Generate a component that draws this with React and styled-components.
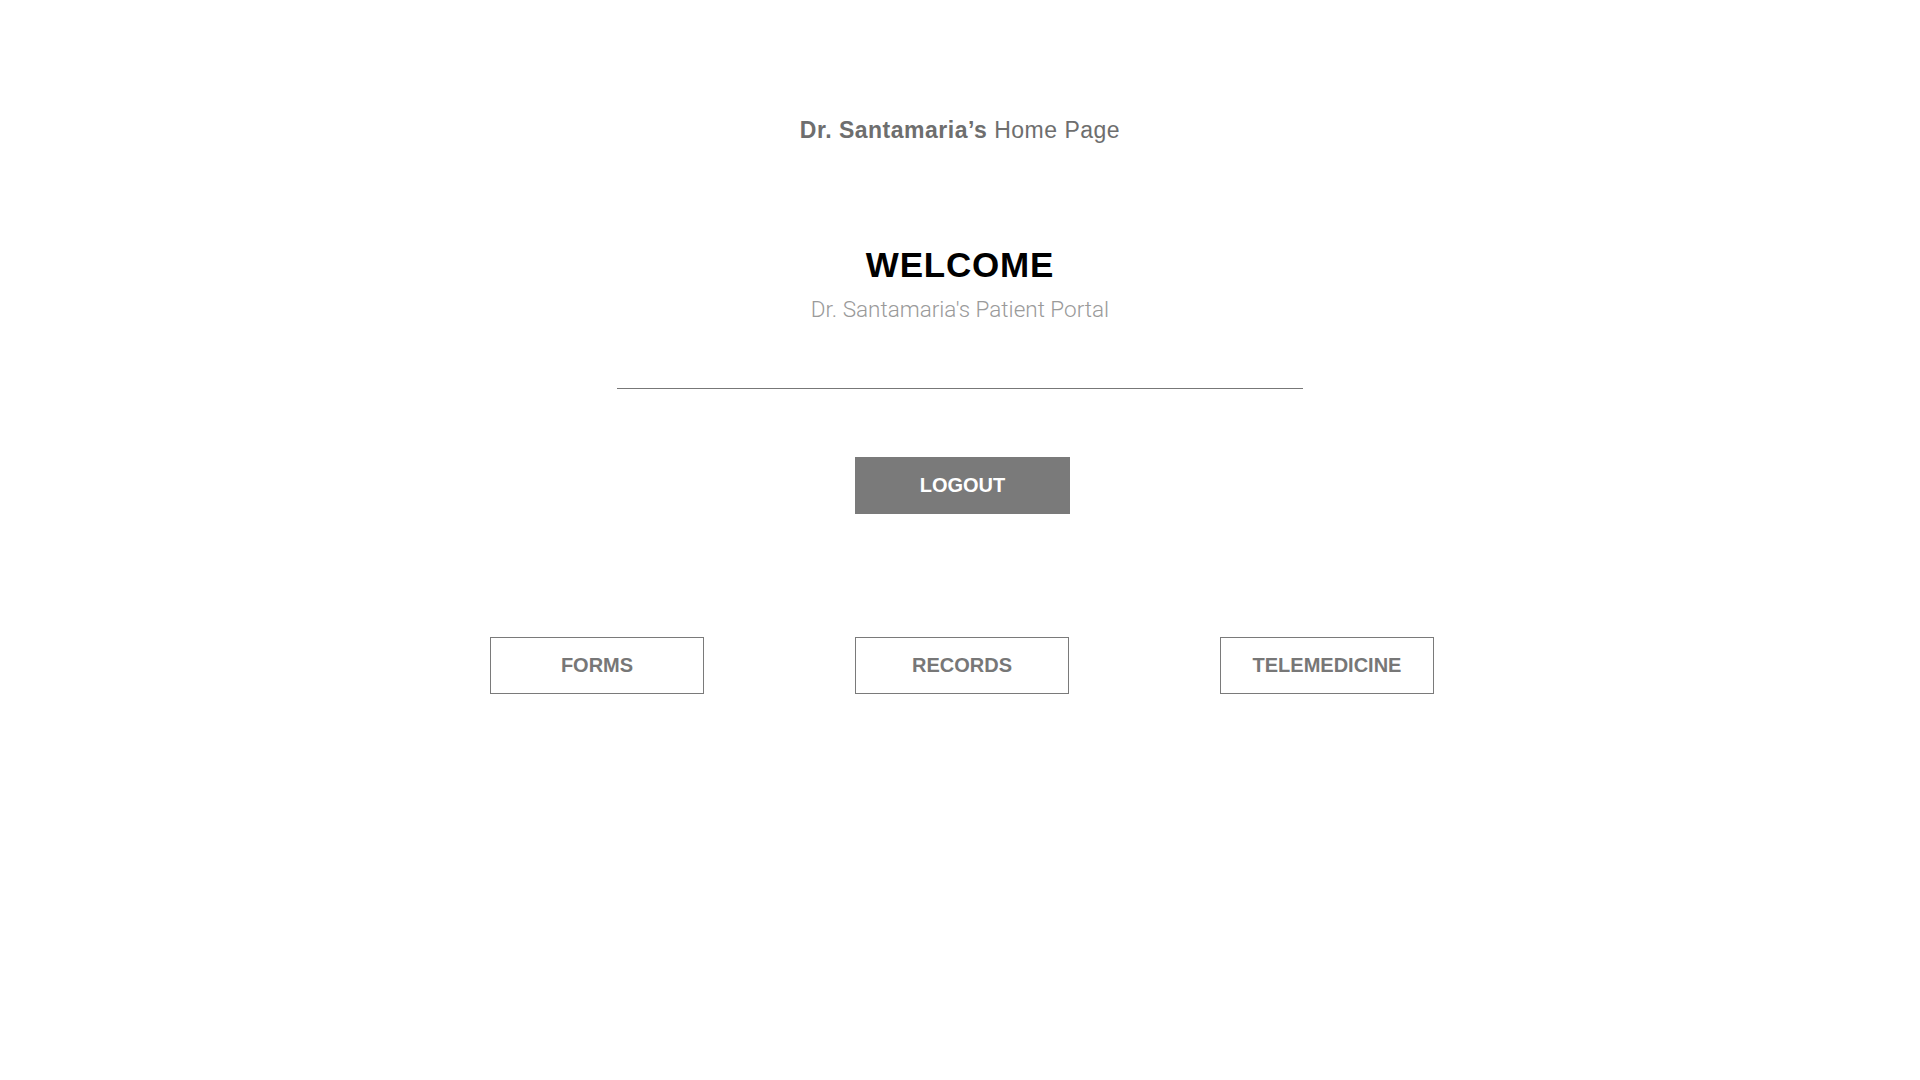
import React from 'react';
import styled, { createGlobalStyle } from 'styled-components';

const GlobalStyle = createGlobalStyle`
  html, body {
    margin: 0;
    padding: 0;
    background: #ffffff;
  }
  body {
    font-family: "Liberation Sans", Arial, sans-serif;
  }
`;

const Page = styled.div`
  display: flex;
  flex-direction: column;
  align-items: center;
  min-height: 100vh;
  padding-top: 117px;
  box-sizing: border-box;
`;

const PageTitle = styled.h1`
  margin: 0;
  font-size: 23px;
  line-height: 26px;
  font-weight: 400;
  letter-spacing: 0.5px;
  color: #6e6e6e;

  strong {
    font-weight: 700;
  }
`;

const Welcome = styled.h2`
  margin: 102px 0 0;
  font-size: 35px;
  line-height: 40px;
  font-weight: 700;
  letter-spacing: 0.8px;
  color: #000000;
`;

const Subtitle = styled.p`
  margin: 10px 0 0;
  font-family: Roboto, "Liberation Sans", sans-serif;
  font-size: 22.5px;
  line-height: 28px;
  font-weight: 300;
  color: #9a9a9a;
`;

const Divider = styled.hr`
  margin: 65px 0 0;
  width: 686px;
  height: 0;
  border: none;
  border-top: 1px solid #777777;
`;

const Button = styled.button`
  width: 215px;
  height: 57px;
  box-sizing: border-box;
  font-family: "Liberation Sans", Arial, sans-serif;
  font-size: 20px;
  font-weight: 700;
  cursor: pointer;
  color: ${p => (p.$filled ? '#ffffff' : '#777777')};
  background: ${p => (p.$filled ? '#7a7a7a' : '#ffffff')};
  border: ${p => (p.$filled ? 'none' : '1px solid #7a7a7a')};
`;

const LogoutWrap = styled.div`
  margin: 68px 0 0 5px;
`;

const NavRow = styled.div`
  display: grid;
  grid-template-columns: repeat(3, 214px);
  column-gap: 151px;
  margin: 123px 0 0 4px;

  ${Button} {
    width: 214px;
    height: 57px;
  }
`;

export default function App() {
  return (
    <>
      <GlobalStyle />
      <Page>
        <PageTitle>
          <strong>Dr. Santamaria’s</strong> Home Page
        </PageTitle>
        <Welcome>WELCOME</Welcome>
        <Subtitle>Dr. Santamaria's Patient Portal</Subtitle>
        <Divider />
        <LogoutWrap>
          <Button $filled>LOGOUT</Button>
        </LogoutWrap>
        <NavRow>
          <Button>FORMS</Button>
          <Button>RECORDS</Button>
          <Button>TELEMEDICINE</Button>
        </NavRow>
      </Page>
    </>
  );
}
